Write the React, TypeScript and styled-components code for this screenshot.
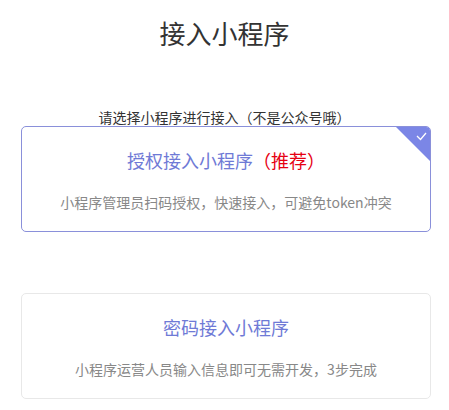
import styled, { createGlobalStyle } from 'styled-components';

const GlobalStyle = createGlobalStyle`
  html, body {
    margin: 0;
    padding: 0;
    background: #fff;
    font-family: "Noto Sans CJK SC", "Noto Sans", sans-serif;
  }
`;

interface Option {
  title: string;
  tag?: string;
  desc: string;
  active?: boolean;
}

const options: Option[] = [
  { title: '授权接入小程序', tag: '（推荐）', desc: '小程序管理员扫码授权，快速接入，可避免token冲突', active: true },
  { title: '密码接入小程序', desc: '小程序运营人员输入信息即可无需开发，3步完成' },
];

// 小程序接入方式选择页
function App() {
  return (
    <Page>
      <GlobalStyle />
      <PageTitle>接入小程序</PageTitle>
      <Hint>请选择小程序进行接入（不是公众号哦）</Hint>
      <OptionList>
        {options.map((item) => (
          <OptionCard key={item.title} $active={item.active}>
            {item.active && (
              <CornerMark>
                <svg width="34" height="34" viewBox="0 0 34 34">
                  <polygon points="0,0 34,0 34,34" fill="#7b86e6" />
                  <polyline
                    points="21,9 24.5,12.5 30,6"
                    fill="none"
                    stroke="#fff"
                    strokeWidth="1.3"
                  />
                </svg>
              </CornerMark>
            )}
            <OptionTitle>
              {item.title}
              {item.tag && <span className="tag">{item.tag}</span>}
            </OptionTitle>
            <OptionDesc>{item.desc}</OptionDesc>
          </OptionCard>
        ))}
      </OptionList>
    </Page>
  );
}

export default App;

const Page = styled.div`
  width: 449px;
  display: flex;
  flex-direction: column;
  align-items: center;
  padding-top: 15px;
`;

const PageTitle = styled.h1`
  margin: 0;
  font-size: 26px;
  line-height: 36px;
  font-weight: 400;
  color: #333;
`;

const Hint = styled.p`
  margin: 57px 0 0;
  font-size: 14px;
  line-height: 18px;
  color: #333;
`;

const OptionList = styled.div`
  display: flex;
  flex-direction: column;
  gap: 61px;
  width: 410px;
  margin-left: 3px;
`;

const OptionCard = styled.div<{ $active?: boolean }>`
  position: relative;
  overflow: hidden;
  display: flex;
  flex-direction: column;
  align-items: center;
  gap: 20px;
  padding: 21px 0 19px;
  border: 1px solid ${({ $active }) => ($active ? '#8a90da' : '#e8e8e8')};
  border-radius: 5px;
  background: #fff;
`;

const CornerMark = styled.div`
  position: absolute;
  top: 0;
  right: 0;
  width: 34px;
  height: 34px;
  svg {
    display: block;
  }
`;

const OptionTitle = styled.div`
  font-size: 18px;
  line-height: 24px;
  color: #6f7ad6;

  .tag {
    color: #e60012;
  }
`;

const OptionDesc = styled.div`
  font-size: 14px;
  line-height: 20px;
  color: #888;
`;
